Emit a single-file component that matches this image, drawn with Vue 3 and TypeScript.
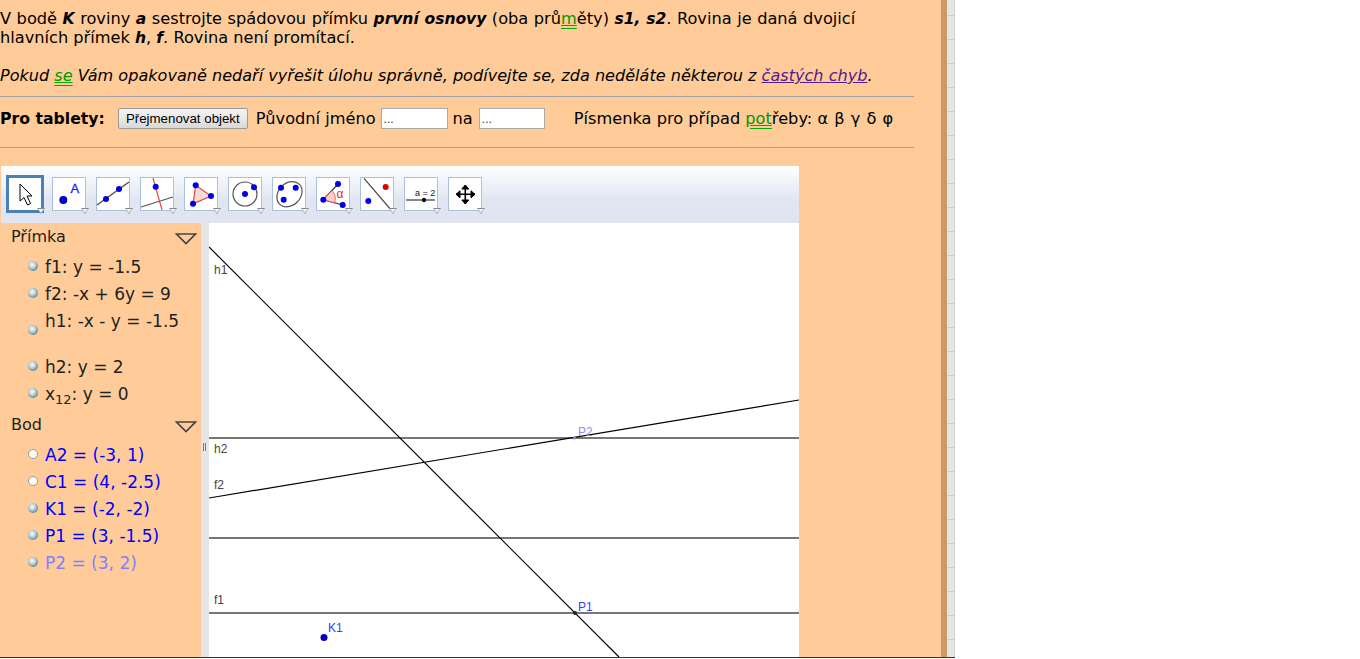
<script setup lang="ts">
interface Row {
  name: string
  sub?: string
  rest: string
  tall?: boolean
}

const lines: Row[] = [
  { name: 'f1', rest: ': y = -1.5' },
  { name: 'f2', rest: ': -x + 6y = 9' },
  { name: 'h1', rest: ': -x - y = -1.5', tall: true },
  { name: 'h2', rest: ': y = 2' },
  { name: 'x', sub: '12', rest: ': y = 0' },
]

const points = [
  { text: 'A2 = (-3, 1)', hollow: true },
  { text: 'C1 = (4, -2.5)', hollow: true },
  { text: 'K1 = (-2, -2)' },
  { text: 'P1 = (3, -1.5)' },
  { text: 'P2 = (3, 2)', faded: true },
]
</script>

<template>
  <div class="page">
    <main class="content">
      <div class="task">
        <p class="assignment">
          V bodě <b><i>K</i></b> roviny <b><i>a</i></b> sestrojte spádovou přímku
          <b><i>první osnovy</i></b> (oba prů<span class="ad">m</span>ěty) <b><i>s1, s2</i></b>.
          Rovina je daná dvojicí hlavních přímek <b><i>h</i></b>, <b><i>f</i></b>. Rovina není promítací.
        </p>
        <p class="hint">
          Pokud <span class="ad">se</span> Vám opakovaně nedaří vyřešit úlohu správně, podívejte se,
          zda neděláte některou z <a class="visited">častých chyb</a>.
        </p>
        <hr />
        <div class="tablet">
          <b class="tablet-title">Pro tablety:</b>
          <button type="button" class="rename">Přejmenovat objekt</button>
          <span>Původní jméno</span>
          <input class="small-input" value="..." />
          <span>na</span>
          <input class="small-input second" value="..." />
          <span class="letters">Písmenka pro případ <span class="ad">pot</span>řeby: <span class="greek">α β γ δ φ</span></span>
        </div>
        <hr />
      </div>

      <section class="applet">
        <div class="toolbar">
          <div class="tool selected">
            <svg viewBox="0 0 32 32"><path d="M11 6V23L15 19.500 18.500 27 21.500 25.500 18 18H23z" fill="#fff" stroke="#000" stroke-width="1" /></svg>
          </div>
          <div class="tool">
            <svg viewBox="0 0 34 34"><circle cx="11.300" cy="23" r="4" fill="#0000c8" /><text x="18.500" y="16" class="tool-a">A</text></svg>
          </div>
          <div class="tool">
            <svg viewBox="0 0 34 34"><path d="M1 28 33 5" stroke="#444" stroke-width="1.2" /><circle cx="10" cy="22" r="3" fill="#0000e0" /><circle cx="23" cy="12" r="3" fill="#0000e0" /></svg>
          </div>
          <div class="tool">
            <svg viewBox="0 0 34 34"><path d="M1 30 33 20" stroke="#555" stroke-width="1.2" /><path d="M13 1 22 33" stroke="#e44" stroke-width="1.2" /><circle cx="15.700" cy="9.700" r="3" fill="#0000e0" /></svg>
          </div>
          <div class="tool">
            <svg viewBox="0 0 34 34"><path d="M11.700 8.300 27 19 9 26.700z" fill="#f6dcd8" stroke="#e44" stroke-width="1.2" /><circle cx="11.700" cy="8.300" r="3" fill="#0000e0" /><circle cx="27" cy="19" r="3" fill="#0000e0" /><circle cx="9" cy="26.700" r="3" fill="#0000e0" /></svg>
          </div>
          <div class="tool">
            <svg viewBox="0 0 34 34"><circle cx="17" cy="17" r="12" fill="none" stroke="#555" stroke-width="1.2" /><circle cx="17" cy="17" r="3" fill="#0000e0" /><circle cx="26" cy="10.300" r="3" fill="#0000e0" /></svg>
          </div>
          <div class="tool">
            <svg viewBox="0 0 34 34"><ellipse cx="17.500" cy="17.200" rx="14" ry="11" transform="rotate(-45 17.500 17.200)" fill="none" stroke="#555" stroke-width="1.2" /><circle cx="9" cy="10.700" r="3" fill="#0000e0" /><circle cx="23.700" cy="10.700" r="3" fill="#0000e0" /><circle cx="11.700" cy="22.700" r="3" fill="#0000e0" /></svg>
          </div>
          <div class="tool">
            <svg viewBox="0 0 34 34"><path d="M7.300 22.700 22 7M7.300 22.700 26.700 28" stroke="#333" stroke-width="1.200" fill="none" /><path d="M7.300 22.700 16 13.500A12 12 0 0 1 18.500 25.800z" fill="#f6d0cc" stroke="#e44" stroke-width=".8" /><text x="20.500" y="21" class="tool-alpha">α</text><circle cx="7.300" cy="22.700" r="3" fill="#0000e0" /><circle cx="22" cy="7" r="3" fill="#0000e0" /><circle cx="26.700" cy="28" r="3" fill="#0000e0" /></svg>
          </div>
          <div class="tool">
            <svg viewBox="0 0 34 34"><path d="M4 1.300 31.700 33.700" stroke="#444" stroke-width="1.2" /><circle cx="25.700" cy="10" r="3" fill="#d80000" /><circle cx="8.300" cy="24" r="3" fill="#0000e0" /></svg>
          </div>
          <div class="tool">
            <svg viewBox="0 0 34 34"><text x="11" y="19" class="tool-slider">a = 2</text><path d="M2 23H31" stroke="#111" stroke-width="1" /><circle cx="20" cy="23" r="2.200" fill="#111" /></svg>
          </div>
          <div class="tool">
            <svg viewBox="0 0 34 34"><path d="M17.300 8V27M8 17.300H27" stroke="#000" stroke-width="1.600" /><path d="M17.300 8l-3.500 4h7zM17.300 27l-3.500-4h7zM8 17.300l4-3.500v7zM27 17.300l-4-3.500v7z" fill="#000" stroke="#000" /></svg>
          </div>
        </div>

        <div class="workspace">
          <aside class="algebra">
            <div class="group-head">
              <span>Přímka</span>
              <svg class="caret" viewBox="0 0 22 12"><path d="M1.500 1H20.500L11 10.500z" fill="none" stroke="#444" stroke-width="1.600" /></svg>
            </div>
            <div v-for="row in lines" :key="row.name" class="row" :class="{ tall: row.tall }">
              <i class="ball" />
              <span>{{ row.name }}<sub v-if="row.sub">{{ row.sub }}</sub>{{ row.rest }}</span>
            </div>
            <div class="group-head">
              <span>Bod</span>
              <svg class="caret" viewBox="0 0 22 12"><path d="M1.500 1H20.500L11 10.500z" fill="none" stroke="#444" stroke-width="1.600" /></svg>
            </div>
            <div v-for="p in points" :key="p.text" class="row point" :class="{ faded: p.faded }">
              <i class="ball" :class="{ hollow: p.hollow }" />
              <span>{{ p.text }}</span>
            </div>
          </aside>
          <div class="divider"><span class="grip" /></div>
          <svg class="canvas" viewBox="0 0 590 434" width="590" height="434">
            <path d="M0 215H590" class="axis" />
            <path d="M0 315H590" class="axis" />
            <path d="M0 390H590" class="axis" />
            <path d="M0 24 410 434" class="line" />
            <path d="M0 275 590 177" class="line" />
            <circle cx="365.500" cy="215" r="1.500" fill="#8080ff" />
            <circle cx="366" cy="390" r="2" fill="#223" />
            <circle cx="115" cy="414.500" r="3.500" fill="#0000c8" />
            <text x="5" y="51" class="lab">h1</text>
            <text x="5" y="230" class="lab">h2</text>
            <text x="5" y="266" class="lab">f2</text>
            <text x="5" y="381" class="lab">f1</text>
            <text x="369" y="213" class="lab faded-lab">P2</text>
            <text x="369" y="388" class="lab blue-lab">P1</text>
            <text x="119" y="409" class="lab blue-lab">K1</text>
          </svg>
        </div>
      </section>
    </main>
    <div class="edge" />
    <div class="strip" />
    <div class="bottom-line" />
  </div>
</template>

<style scoped>
.page {
  position: relative;
  display: flex;
  width: 1360px;
  height: 659px;
  overflow: hidden;
  background: #fff;
  font-family: 'DejaVu Sans', Verdana, sans-serif;
  font-size: 16px;
  color: #000;
}

.content {
  width: 941px;
  flex: none;
  background: #ffcc99;
}

.task {
  width: 914px;
  padding-top: 9px;
  font-size: 16.2px;
  line-height: 19px;
}

.task p {
  margin: 0;
  height: 38px;
}

.task p b {
  font-size: 15.5px;
  line-height: 1;
}

.assignment::first-line {
  word-spacing: 0.4px;
}

.hint {
  height: 19px !important;
  margin-top: 19px !important;
  font-size: 16.09px;
  font-style: italic;
}

.ad {
  color: #009900;
  text-decoration: underline double #00aa00;
}

.visited {
  color: #551a8b;
  text-decoration: underline;
}

hr {
  height: 0;
  margin: 11px 0 0;
  border: none;
  border-top: 1px solid #a0a0a8;
}

.tablet {
  display: flex;
  align-items: center;
  gap: 5px;
  height: 21px;
  margin-top: 11px;
  margin-bottom: 18px;
  white-space: pre;
}

.tablet-title {
  margin-right: 8px;
  font-size: 15.7px;
}

.tablet + hr {
  margin-top: 0;
}

.rename {
  width: 130px;
  height: 21px;
  margin-right: 3px;
  padding: 0;
  border: 1px solid #9a9a9a;
  border-radius: 2px;
  background: linear-gradient(180deg, #f4f4f4 0%, #e8e8e8 50%, #d8d8d8 100%);
  font-family: 'Liberation Sans', Arial, sans-serif;
  font-size: 13.3px;
  color: #000;
}

.small-input {
  width: 67px;
  height: 21px;
  box-sizing: border-box;
  padding: 0 2px;
  border: 1px solid #a9a9a9;
  background: #fff;
  font-family: 'Liberation Sans', Arial, sans-serif;
  font-size: 12px;
  color: #333;
}

.small-input.second {
  margin-left: 1px;
  width: 66px;
}

.letters {
  margin-left: 24px;
}

.greek {
  letter-spacing: 0.5px;
}

.applet {
  width: 798px;
  margin: 18px 0 0 1px;
}

.toolbar {
  display: flex;
  align-items: center;
  gap: 10px;
  height: 57px;
  padding-left: 5px;
  padding-bottom: 1px;
  box-sizing: border-box;
  background: linear-gradient(180deg, #ffffff 0%, #e0e6f2 60%, #dfe4f0 100%);
}

.tool {
  position: relative;
  width: 34px;
  height: 34px;
  box-sizing: border-box;
  border: 1px solid #a9c0de;
  background: #fff;
}

.tool svg {
  display: block;
  width: 34px;
  height: 34px;
  margin: -1px;
}

.tool::after,
.tool::before {
  content: '';
  position: absolute;
  width: 0;
  height: 0;
  z-index: 1;
}

.tool::after {
  right: -4px;
  bottom: -4px;
  border-left: 4.5px solid transparent;
  border-right: 4.5px solid transparent;
  border-top: 6px solid #8a8a8a;
}

.tool::before {
  right: -3px;
  bottom: -3px;
  z-index: 2;
  border-left: 3.5px solid transparent;
  border-right: 3.5px solid transparent;
  border-top: 4.5px solid #eef1f7;
}

.tool.selected {
  width: 38px;
  height: 38px;
  margin-right: -2px;
  border: 3px solid #4a80b4;
}

.tool.selected svg {
  width: 32px;
  height: 32px;
  margin: 0;
}

.tool-a {
  font-family: 'Liberation Sans', Arial, sans-serif;
  font-size: 13px;
  fill: #1a1aff;
  stroke: #1a1aff;
  stroke-width: 0.3;
}

.tool-alpha {
  font-family: 'Liberation Sans', Arial, sans-serif;
  font-size: 12px;
  fill: #e03030;
}

.tool-slider {
  font-family: 'Liberation Sans', Arial, sans-serif;
  font-size: 9px;
  fill: #111;
}

.workspace {
  display: flex;
  height: 434px;
}

.algebra {
  width: 200px;
  flex: none;
  background: #ffcc99;
  font-size: 17px;
}

.group-head {
  display: flex;
  align-items: center;
  justify-content: space-between;
  height: 27px;
  margin-bottom: 3px;
  padding: 0 4px 0 10px;
  box-sizing: border-box;
  font-size: 16px;
  color: #222;
}

.row + .group-head {
  margin-top: 4px;
}

.caret {
  width: 22px;
  height: 12px;
  margin-top: 5px;
}

.row {
  display: flex;
  align-items: center;
  gap: 7px;
  height: 27px;
  padding-left: 27px;
  color: #222;
  white-space: nowrap;
}

.row.tall {
  height: 46px;
  align-items: flex-start;
}

.row.tall span {
  padding-top: 4px;
}

.row.tall .ball {
  margin-top: 18px;
}

sub {
  font-size: 13px;
  line-height: 0;
}

.point {
  color: #0000ff;
}

.point.faded {
  color: #8080ff;
}

.ball {
  width: 10px;
  height: 10px;
  flex: none;
  margin-bottom: 2px;
  border-radius: 50%;
  background: radial-gradient(circle at 42% 38%, #f4f8f8 0%, #cfe0e6 28%, #7fa5ae 60%, #2f5f6b 100%);
}

.ball.hollow {
  box-sizing: border-box;
  border: 1px solid #999;
  background: #fff;
}

.divider {
  position: relative;
  width: 8px;
  flex: none;
  background: #e6e6e6;
}

.grip {
  position: absolute;
  left: 2px;
  top: 220px;
  width: 3px;
  height: 8px;
  border-left: 1px solid #777;
  border-right: 1px solid #777;
  box-sizing: border-box;
}

.canvas {
  display: block;
  flex: none;
  background: #fff;
}

.line {
  stroke: #000;
  stroke-width: 1.2;
  fill: none;
}

.axis {
  stroke: #777;
  stroke-width: 2;
  fill: none;
}

.lab {
  font-family: 'Liberation Sans', Arial, sans-serif;
  font-size: 12px;
  fill: #444;
}

.blue-lab {
  fill: #3a3aff;
}

.faded-lab {
  fill: #8c8cff;
}

.edge {
  width: 6px;
  flex: none;
  background: #cc9966;
}

.strip {
  width: 8px;
  flex: none;
  box-sizing: border-box;
  border-right: 1px solid #cfcfcf;
  background: #e6e6e6 repeating-linear-gradient(180deg, transparent 0, transparent 15px, #d0d0d0 15px, #d0d0d0 16px, transparent 16px, transparent 24px);
  background-size: 100% 24px;
}

.bottom-line {
  position: absolute;
  left: 0;
  top: 657px;
  width: 955px;
  height: 2px;
  background: linear-gradient(180deg, #333 50%, #fff 50%);
}
</style>
